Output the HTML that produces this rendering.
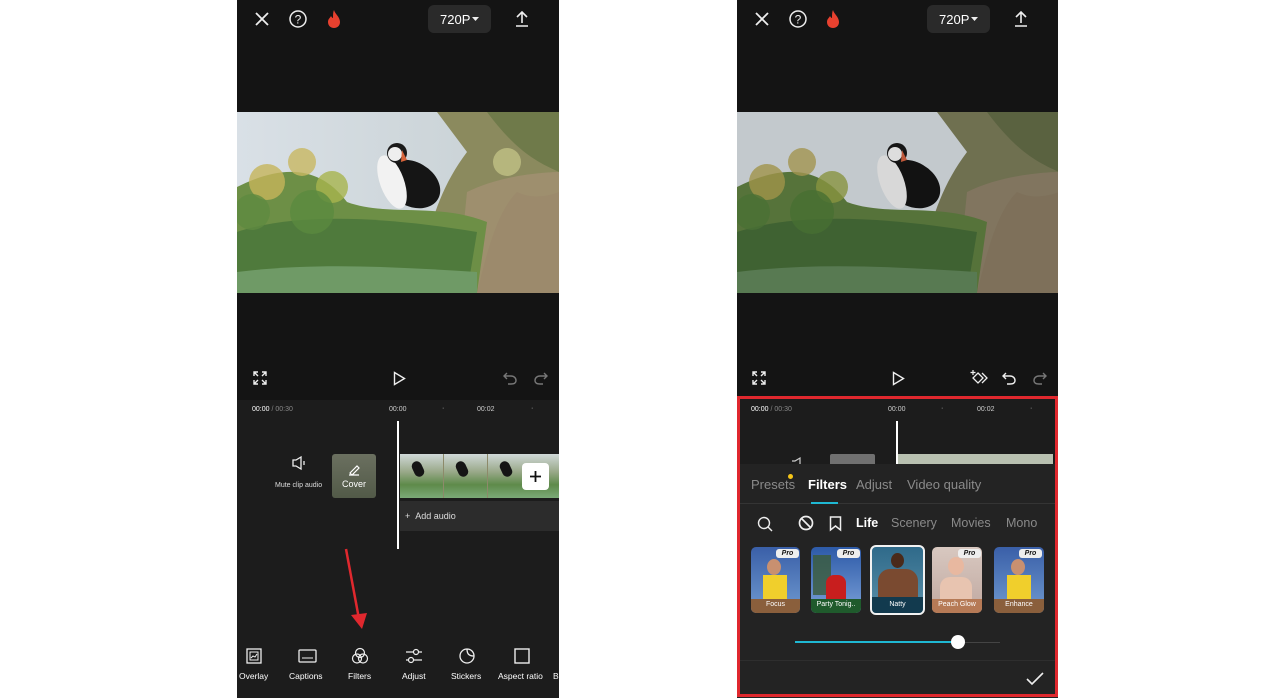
<!DOCTYPE html>
<html><head><meta charset="utf-8"><style>
*{margin:0;padding:0;box-sizing:border-box}
body{width:1280px;height:698px;background:#fff;position:relative;overflow:hidden;font-family:"Liberation Sans",sans-serif;color:#fff}
.ph{position:absolute;top:0;width:322px;height:698px;background:#141414;overflow:hidden}
.a{position:absolute}
.t{position:absolute;white-space:nowrap}
svg{position:absolute;overflow:visible}
</style></head><body>

<!-- LEFT PHONE -->
<div class="ph" style="left:237px">
  <svg style="left:17px;top:11px" width="16" height="16"><path d="M2 2L14 14M14 2L2 14" stroke="#eee" stroke-width="1.8"/></svg>
  <svg style="left:52px;top:10px" width="18" height="18"><circle cx="9" cy="9" r="8" fill="none" stroke="#eee" stroke-width="1.5"/><text x="9" y="13.5" font-size="12" text-anchor="middle" fill="#eee" font-family="Liberation Sans">?</text></svg>
  <svg style="left:89px;top:9px" width="16" height="20"><path d="M8 1C9 5 14 8 14 13C14 17 11 19 8 19C5 19 2 17 2 13C2 10 4 9 5 7C6 9 7 9 7 9C7 6 7 3 8 1Z" fill="#e8412f"/></svg>
  <div class="a" style="left:191px;top:5px;width:63px;height:28px;background:#2a2a2a;border-radius:6px"></div>
  <div class="t" style="left:203px;top:12px;font-size:13px">720P</div>
  <svg style="left:235px;top:16px" width="8" height="6"><path d="M0 1H7L3.5 5Z" fill="#eee"/></svg>
  <svg style="left:278px;top:10px" width="14" height="17"><path d="M7 2V13M2 7L7 2L12 7M1 16H13" stroke="#eee" stroke-width="1.6" fill="none"/></svg>

  <svg style="left:0;top:112px" width="322" height="181" viewBox="0 0 322 181">
    <defs><linearGradient id="sky" x1="0" y1="0" x2="1" y2="0"><stop offset="0" stop-color="#d9e0e6"/><stop offset="1" stop-color="#c6cfd2"/></linearGradient></defs>
    <rect width="322" height="181" fill="url(#sky)"/>
    <path d="M200 0H322V181H180C190 120 200 80 230 40Z" fill="#8b8a5e"/>
    <path d="M250 0H322V60C300 50 280 40 250 0Z" fill="#6f7a4a"/>
    <path d="M230 80C270 60 322 60 322 60V181H220Z" fill="#a08f70" opacity=".9"/>
    <path d="M0 75C40 55 80 50 110 90C150 105 200 90 250 110L240 181H0Z" fill="#6d8f46"/>
    <path d="M0 120C60 100 150 105 240 120L230 181H0Z" fill="#4f7a3c"/>
    <path d="M0 160C80 150 160 155 240 160V181H0Z" fill="#6f9a66"/>
    <circle cx="30" cy="70" r="18" fill="#c5b45a" opacity=".8"/>
    <circle cx="65" cy="50" r="14" fill="#c8b862" opacity=".8"/>
    <circle cx="95" cy="75" r="16" fill="#a8b44e" opacity=".8"/>
    <circle cx="15" cy="100" r="18" fill="#5e8a40" opacity=".8"/>
    <circle cx="75" cy="100" r="22" fill="#5a8a3e" opacity=".8"/>
    <circle cx="270" cy="50" r="14" fill="#c9c98a" opacity=".7"/>
    <path d="M280 80C300 90 322 80 322 80V181H240C250 140 260 100 280 80Z" fill="#9c8a6c"/>
    <ellipse cx="175" cy="72" rx="30" ry="22" fill="#151515" transform="rotate(30 175 72)"/>
    <ellipse cx="155" cy="70" rx="12" ry="28" fill="#f2f2f2" transform="rotate(-20 155 70)"/>
    <circle cx="160" cy="41" r="10" fill="#1a1a1a"/>
    <circle cx="158" cy="42" r="7" fill="#eee"/>
    <path d="M165 38L170 48L164 50Z" fill="#d8643a"/>
  </svg>

  <svg style="left:16px;top:371px" width="14" height="14"><path d="M1 5V1H5M9 1H13V5M13 9V13H9M5 13H1V9M1 1L5 5M13 1L9 5M13 13L9 9M1 13L5 9" stroke="#eee" stroke-width="1.4" fill="none"/></svg>
  <svg style="left:156px;top:371px" width="13" height="15"><path d="M1.5 1.5L11.5 7.5L1.5 13.5Z" stroke="#eee" stroke-width="1.4" fill="none"/></svg>
  <svg style="left:266px;top:371px" width="14" height="14"><path d="M4 2L1 5L4 8M1 5H8C11 5 13 7 13 9.5C13 12 11 13 8 13H5" stroke="#777" stroke-width="1.4" fill="none"/></svg>
  <svg style="left:297px;top:371px" width="14" height="14"><path d="M10 2L13 5L10 8M13 5H6C3 5 1 7 1 9.5C1 12 3 13 6 13H9" stroke="#777" stroke-width="1.4" fill="none"/></svg>

  <div class="a" style="left:0;top:400px;width:322px;height:298px;background:#1c1c1c"></div>
  <div class="t" style="left:15px;top:406px;font-size:7px"><span>00:00</span><span style="color:#888"> / 00:30</span></div>
  <div class="t" style="left:152px;top:406px;font-size:7px;color:#ccc">00:00</div>
  <div class="t" style="left:205px;top:405px;font-size:7px;color:#ccc">·</div>
  <div class="t" style="left:240px;top:406px;font-size:7px;color:#ccc">00:02</div>
  <div class="t" style="left:294px;top:405px;font-size:7px;color:#ccc">·</div>

  <svg style="left:54px;top:456px" width="16" height="14"><path d="M2 4H5L10 1V13L5 10H2Z M13 5V9" stroke="#eee" stroke-width="1.3" fill="none"/></svg>
  <div class="t" style="left:38px;top:482px;font-size:7px;color:#ddd">Mute clip audio</div>
  <div class="a" style="left:95px;top:454px;width:44px;height:44px;border-radius:3px;background:linear-gradient(#6b7060,#525a48)"></div>
  <svg style="left:111px;top:463px" width="12" height="12"><path d="M2 10L9 3L11 5L4 12Z M1 12H11" stroke="#fff" stroke-width="1.2" fill="none"/></svg>
  <div class="t" style="left:105px;top:479px;font-size:9px">Cover</div>

  <div class="a" style="left:163px;top:454px;width:159px;height:44px;background:linear-gradient(#cfd8d8 0,#9aa98a 40%,#5e8a4a 70%,#7caa78 100%)"></div>
  <div class="a" style="left:176px;top:461px;width:10px;height:16px;background:#151515;border-radius:5px;transform:rotate(-25deg)"></div>
  <div class="a" style="left:220px;top:461px;width:10px;height:16px;background:#151515;border-radius:5px;transform:rotate(-25deg)"></div>
  <div class="a" style="left:264px;top:461px;width:10px;height:16px;background:#151515;border-radius:5px;transform:rotate(-25deg)"></div>
  <div class="a" style="left:206px;top:454px;width:1px;height:44px;background:#8d8a6a"></div>
  <div class="a" style="left:250px;top:454px;width:1px;height:44px;background:#8d8a6a"></div>
  <div class="a" style="left:285px;top:463px;width:27px;height:27px;background:#fff;border-radius:4px"></div>
  <svg style="left:292px;top:470px" width="13" height="13"><path d="M6.5 1V12M1 6.5H12" stroke="#111" stroke-width="1.8"/></svg>
  <div class="a" style="left:163px;top:501px;width:159px;height:30px;background:#2c2c2c"></div>
  <div class="t" style="left:168px;top:511px;font-size:9px;color:#ddd">+&nbsp;&nbsp;Add audio</div>
  <div class="a" style="left:160px;top:421px;width:2px;height:128px;background:#fff"></div>

  <svg style="left:100px;top:545px" width="40" height="90"><path d="M9 4L22 74" stroke="#e0282e" stroke-width="2.5"/><path d="M14 70L25 84L30 68Z" fill="#e0282e"/></svg>

  <svg style="left:9px;top:648px" width="16" height="16"><rect x="1" y="1" width="14" height="14" stroke="#eee" stroke-width="1.3" fill="none"/><rect x="4" y="4" width="8" height="8" stroke="#eee" stroke-width="1" fill="none"/><path d="M5 10L7 8L9 9L11 6" stroke="#eee" fill="none"/></svg>
  <svg style="left:61px;top:649px" width="19" height="14"><rect x="1" y="1" width="17" height="12" rx="1" stroke="#eee" stroke-width="1.3" fill="none"/><path d="M4 9H15" stroke="#eee"/></svg>
  <svg style="left:114px;top:647px" width="18" height="18"><circle cx="9" cy="6" r="4.5" stroke="#eee" stroke-width="1.2" fill="none"/><circle cx="6" cy="11.5" r="4.5" stroke="#eee" stroke-width="1.2" fill="none"/><circle cx="12" cy="11.5" r="4.5" stroke="#eee" stroke-width="1.2" fill="none"/></svg>
  <svg style="left:168px;top:648px" width="18" height="16"><path d="M1 4H17M1 12H17" stroke="#eee" stroke-width="1.2"/><circle cx="11" cy="4" r="2.5" fill="#1c1c1c" stroke="#eee" stroke-width="1.2"/><circle cx="6" cy="12" r="2.5" fill="#1c1c1c" stroke="#eee" stroke-width="1.2"/></svg>
  <svg style="left:221px;top:647px" width="18" height="18"><path d="M16 9A7 7 0 1 1 9 2C13 2 16 5 16 9Z M9 2C9 7 11 9 16 9" stroke="#eee" stroke-width="1.3" fill="none"/></svg>
  <svg style="left:277px;top:648px" width="16" height="16"><rect x="1" y="1" width="14" height="14" stroke="#eee" stroke-width="1.4" fill="none"/></svg>
  <div class="t" style="left:2px;top:671px;font-size:8.5px">Overlay</div>
  <div class="t" style="left:52px;top:671px;font-size:8.5px">Captions</div>
  <div class="t" style="left:111px;top:671px;font-size:8.5px">Filters</div>
  <div class="t" style="left:165px;top:671px;font-size:8.5px">Adjust</div>
  <div class="t" style="left:214px;top:671px;font-size:8.5px">Stickers</div>
  <div class="t" style="left:261px;top:671px;font-size:8.5px">Aspect ratio</div>
  <div class="t" style="left:316px;top:671px;font-size:8.5px">B</div>
</div>

<!-- RIGHT PHONE -->
<div class="ph" style="left:737px;width:321px">
  <svg style="left:17px;top:11px" width="16" height="16"><path d="M2 2L14 14M14 2L2 14" stroke="#eee" stroke-width="1.8"/></svg>
  <svg style="left:52px;top:10px" width="18" height="18"><circle cx="9" cy="9" r="8" fill="none" stroke="#eee" stroke-width="1.5"/><text x="9" y="13.5" font-size="12" text-anchor="middle" fill="#eee" font-family="Liberation Sans">?</text></svg>
  <svg style="left:88px;top:9px" width="16" height="20"><path d="M8 1C9 5 14 8 14 13C14 17 11 19 8 19C5 19 2 17 2 13C2 10 4 9 5 7C6 9 7 9 7 9C7 6 7 3 8 1Z" fill="#e8412f"/></svg>
  <div class="a" style="left:190px;top:5px;width:63px;height:28px;background:#2a2a2a;border-radius:6px"></div>
  <div class="t" style="left:202px;top:12px;font-size:13px">720P</div>
  <svg style="left:234px;top:16px" width="8" height="6"><path d="M0 1H7L3.5 5Z" fill="#eee"/></svg>
  <svg style="left:277px;top:10px" width="14" height="17"><path d="M7 2V13M2 7L7 2L12 7M1 16H13" stroke="#eee" stroke-width="1.6" fill="none"/></svg>

  <svg style="left:0;top:112px" width="322" height="181" viewBox="0 0 322 181">
    <rect width="322" height="181" fill="#c3c9cd"/>
    <path d="M200 0H322V181H180C190 120 200 80 230 40Z" fill="#6f7050"/>
    <path d="M250 0H322V60C300 50 280 40 250 0Z" fill="#5a6240"/>
    <path d="M230 80C270 60 322 60 322 60V181H220Z" fill="#837560" opacity=".9"/>
    <path d="M0 75C40 55 80 50 110 90C150 105 200 90 250 110L240 181H0Z" fill="#56733a"/>
    <path d="M0 120C60 100 150 105 240 120L230 181H0Z" fill="#3f6232"/>
    <path d="M0 160C80 150 160 155 240 160V181H0Z" fill="#587a52"/>
    <circle cx="30" cy="70" r="18" fill="#a0934a" opacity=".8"/>
    <circle cx="65" cy="50" r="14" fill="#a39550" opacity=".8"/>
    <circle cx="95" cy="75" r="16" fill="#889340" opacity=".8"/>
    <circle cx="15" cy="100" r="18" fill="#4a7034" opacity=".8"/>
    <circle cx="75" cy="100" r="22" fill="#476f32" opacity=".8"/>
    <path d="M280 80C300 90 322 80 322 80V181H240C250 140 260 100 280 80Z" fill="#7e705a"/>
    <ellipse cx="175" cy="72" rx="30" ry="22" fill="#121212" transform="rotate(30 175 72)"/>
    <ellipse cx="155" cy="70" rx="12" ry="28" fill="#d8d8d8" transform="rotate(-20 155 70)"/>
    <circle cx="160" cy="41" r="10" fill="#151515"/>
    <circle cx="158" cy="42" r="7" fill="#ddd"/>
    <path d="M165 38L170 48L164 50Z" fill="#c0583a"/>
  </svg>

  <svg style="left:15px;top:371px" width="14" height="14"><path d="M1 5V1H5M9 1H13V5M13 9V13H9M5 13H1V9M1 1L5 5M13 1L9 5M13 13L9 9M1 13L5 9" stroke="#eee" stroke-width="1.4" fill="none"/></svg>
  <svg style="left:155px;top:371px" width="13" height="15"><path d="M1.5 1.5L11.5 7.5L1.5 13.5Z" stroke="#eee" stroke-width="1.4" fill="none"/></svg>
  <svg style="left:232px;top:369px" width="18" height="17"><path d="M4 1V6M1.5 3.5H6.5" stroke="#eee" stroke-width="1.2"/><path d="M9 4L14 9L9 14L4 9Z M13 4L18 9L13 14" stroke="#eee" stroke-width="1.3" fill="none"/></svg>
  <svg style="left:265px;top:371px" width="14" height="14"><path d="M4 2L1 5L4 8M1 5H8C11 5 13 7 13 9.5C13 12 11 13 8 13H5" stroke="#eee" stroke-width="1.4" fill="none"/></svg>
  <svg style="left:296px;top:371px" width="14" height="14"><path d="M10 2L13 5L10 8M13 5H6C3 5 1 7 1 9.5C1 12 3 13 6 13H9" stroke="#777" stroke-width="1.4" fill="none"/></svg>

  <div class="a" style="left:0;top:398px;width:321px;height:300px;background:#1c1c1c"></div>
  <div class="t" style="left:14px;top:406px;font-size:7px"><span>00:00</span><span style="color:#888"> / 00:30</span></div>
  <div class="t" style="left:151px;top:406px;font-size:7px;color:#ccc">00:00</div>
  <div class="t" style="left:204px;top:405px;font-size:7px;color:#ccc">·</div>
  <div class="t" style="left:240px;top:406px;font-size:7px;color:#ccc">00:02</div>
  <div class="t" style="left:293px;top:405px;font-size:7px;color:#ccc">·</div>
  <div class="a" style="left:93px;top:454px;width:45px;height:12px;background:#707070;border-radius:2px"></div>
  <div class="a" style="left:161px;top:454px;width:155px;height:12px;background:#b8c0b0"></div>
  <div class="a" style="left:159px;top:421px;width:2px;height:45px;background:#fff"></div>
  <svg style="left:53px;top:457px" width="16" height="8"><path d="M2 4H5L10 1V8" stroke="#ccc" stroke-width="1.2" fill="none"/></svg>

  <div class="a" style="left:0;top:464px;width:321px;height:234px;background:#232323"></div>
  <div class="t" style="left:14px;top:477px;font-size:13px;color:#8a8a8a">Presets</div>
  <div class="a" style="left:51px;top:474px;width:5px;height:5px;border-radius:50%;background:#f5c518"></div>
  <div class="t" style="left:71px;top:477px;font-size:13px;font-weight:bold">Filters</div>
  <div class="t" style="left:119px;top:477px;font-size:13px;color:#8a8a8a">Adjust</div>
  <div class="t" style="left:170px;top:477px;font-size:13px;color:#8a8a8a">Video quality</div>
  <div class="a" style="left:0;top:503px;width:321px;height:1px;background:#343434"></div>
  <div class="a" style="left:74px;top:502px;width:27px;height:2px;background:#1fb8d3"></div>

  <svg style="left:20px;top:516px" width="16" height="16"><circle cx="7" cy="7" r="5.5" stroke="#eee" stroke-width="1.4" fill="none"/><path d="M11 11L15 15" stroke="#eee" stroke-width="1.4"/></svg>
  <svg style="left:61px;top:515px" width="16" height="16"><circle cx="8" cy="8" r="6.5" stroke="#eee" stroke-width="1.7" fill="none"/><path d="M3.5 3.5L12.5 12.5" stroke="#eee" stroke-width="1.7"/></svg>
  <svg style="left:92px;top:516px" width="13" height="15"><path d="M1.5 1H11.5V14L6.5 10L1.5 14Z" stroke="#eee" stroke-width="1.5" fill="none"/></svg>
  <div class="t" style="left:119px;top:516px;font-size:12.5px;font-weight:bold">Life</div>
  <div class="t" style="left:154px;top:516px;font-size:12.5px;color:#8a8a8a">Scenery</div>
  <div class="t" style="left:214px;top:516px;font-size:12.5px;color:#8a8a8a">Movies</div>
  <div class="t" style="left:269px;top:516px;font-size:12.5px;color:#8a8a8a">Mono</div>

  <div class="a" style="left:14px;top:547px;width:49px;height:66px;border-radius:5px;overflow:hidden;background:linear-gradient(#3a5fa8,#6f9ad0)">
    <div class="a" style="left:16px;top:12px;width:14px;height:16px;border-radius:50%;background:#c89070"></div>
    <div class="a" style="left:12px;top:28px;width:24px;height:26px;background:#f0cf2c"></div>
    <div class="a" style="left:0;top:52px;width:49px;height:14px;background:#8a5f3c"></div>
    <div class="t" style="left:0;width:49px;text-align:center;top:54px;font-size:7px">Focus</div>
  </div>
  <div class="a" style="left:74px;top:547px;width:50px;height:66px;border-radius:5px;overflow:hidden;background:linear-gradient(#2d5aa8,#7aa0d8)">
    <div class="a" style="left:2px;top:8px;width:18px;height:40px;background:#3b5b3a;opacity:.8"></div>
    <div class="a" style="left:15px;top:28px;width:20px;height:26px;background:#c81e1e;border-radius:8px 8px 0 0"></div>
    <div class="a" style="left:0;top:52px;width:50px;height:14px;background:#1f5a2c"></div>
    <div class="t" style="left:0;width:50px;text-align:center;top:54px;font-size:7px">Party Tonig..</div>
  </div>
  <div class="a" style="left:133px;top:545px;width:55px;height:70px;border-radius:6px;border:2px solid #f2f2f2;overflow:hidden;background:linear-gradient(#2f6a8a,#5a8fa8)">
    <div class="a" style="left:19px;top:6px;width:13px;height:15px;border-radius:50%;background:#4a2a1a"></div>
    <div class="a" style="left:6px;top:22px;width:40px;height:28px;border-radius:12px 12px 0 0;background:#7a4a30"></div>
    <div class="a" style="left:0;top:50px;width:51px;height:16px;background:#123a4e"></div>
    <div class="t" style="left:0;width:51px;text-align:center;top:54px;font-size:7px">Natty</div>
  </div>
  <div class="a" style="left:195px;top:547px;width:50px;height:66px;border-radius:5px;overflow:hidden;background:linear-gradient(#d8c8c0,#c0a8a0)">
    <div class="a" style="left:16px;top:10px;width:16px;height:18px;border-radius:50%;background:#e8b8a0"></div>
    <div class="a" style="left:8px;top:30px;width:32px;height:22px;border-radius:10px 10px 0 0;background:#e8c4b0"></div>
    <div class="a" style="left:0;top:52px;width:50px;height:14px;background:#b67a56"></div>
    <div class="t" style="left:0;width:50px;text-align:center;top:54px;font-size:7px">Peach Glow</div>
  </div>
  <div class="a" style="left:257px;top:547px;width:50px;height:66px;border-radius:5px;overflow:hidden;background:linear-gradient(#3a5fa8,#6f9ad0)">
    <div class="a" style="left:17px;top:12px;width:14px;height:16px;border-radius:50%;background:#c89070"></div>
    <div class="a" style="left:13px;top:28px;width:24px;height:26px;background:#f0cf2c"></div>
    <div class="a" style="left:0;top:52px;width:50px;height:14px;background:#8a5f3c"></div>
    <div class="t" style="left:0;width:50px;text-align:center;top:54px;font-size:7px">Enhance</div>
  </div>
  <div class="t" style="left:39px;top:549px;width:23px;height:9px;background:#eee;color:#111;font-size:7px;font-weight:bold;font-style:italic;border-radius:3px;text-align:center;line-height:9px">Pro</div>
  <div class="t" style="left:100px;top:549px;width:23px;height:9px;background:#eee;color:#111;font-size:7px;font-weight:bold;font-style:italic;border-radius:3px;text-align:center;line-height:9px">Pro</div>
  <div class="t" style="left:221px;top:549px;width:23px;height:9px;background:#eee;color:#111;font-size:7px;font-weight:bold;font-style:italic;border-radius:3px;text-align:center;line-height:9px">Pro</div>
  <div class="t" style="left:282px;top:549px;width:23px;height:9px;background:#eee;color:#111;font-size:7px;font-weight:bold;font-style:italic;border-radius:3px;text-align:center;line-height:9px">Pro</div>

  <div class="a" style="left:58px;top:642px;width:205px;height:1px;background:#444"></div>
  <div class="a" style="left:58px;top:641px;width:163px;height:2px;background:#1fb8d3"></div>
  <div class="a" style="left:214px;top:635px;width:14px;height:14px;border-radius:50%;background:#fff"></div>
  <div class="a" style="left:0;top:660px;width:321px;height:1px;background:#2e2e2e"></div>
  <svg style="left:289px;top:672px" width="18" height="14"><path d="M1 7L6 12L17 1" stroke="#eee" stroke-width="1.6" fill="none"/></svg>

  <div class="a" style="left:0;top:396px;width:321px;height:301px;border:3px solid #e0282e"></div>
</div>
</body></html>
